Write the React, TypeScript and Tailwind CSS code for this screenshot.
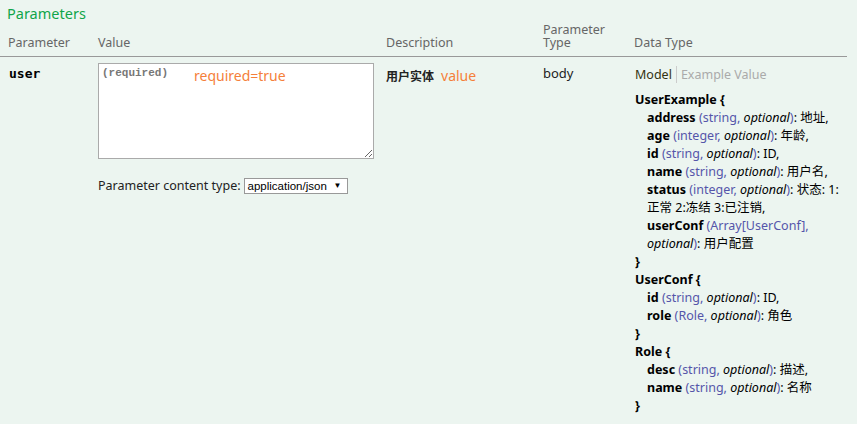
import React from "react";

const font = { fontFamily: '"Noto Sans", "Noto Sans CJK SC", sans-serif' };

type Prop = { name: string; type: string; desc: string };

const models: { title: string; props: Prop[] }[] = [
  {
    title: "UserExample",
    props: [
      { name: "address", type: "string", desc: "地址" },
      { name: "age", type: "integer", desc: "年龄" },
      { name: "id", type: "string", desc: "ID" },
      { name: "name", type: "string", desc: "用户名" },
      { name: "status", type: "integer", desc: "状态: 1:正常 2:冻结 3:已注销" },
      { name: "userConf", type: "Array[UserConf]", desc: "用户配置" },
    ],
  },
  {
    title: "UserConf",
    props: [
      { name: "id", type: "string", desc: "ID" },
      { name: "role", type: "Role", desc: "角色" },
    ],
  },
  {
    title: "Role",
    props: [
      { name: "desc", type: "string", desc: "描述" },
      { name: "name", type: "string", desc: "名称" },
    ],
  },
];

function Model() {
  return (
    <div className="text-[12.5px] leading-[18px] text-black mt-[8px]">
      {models.map((m) => (
        <div key={m.title}>
          <div className="font-bold">{m.title} {"{"}</div>
          {m.props.map((p, i) => (
            <div key={p.name} className="pl-[12px]">
              <span className="font-bold">{p.name}</span>{" "}
              <span className="text-[#55a]">
                ({p.type}, <span className="italic text-black">optional</span>)
              </span>
              : {p.desc}
              {i < m.props.length - 1 ? "," : ""}
            </div>
          ))}
          <div className="font-bold">{"}"}</div>
        </div>
      ))}
    </div>
  );
}

export default function App() {
  return (
    <div className="w-[857px] h-[424px] bg-[#ecf5f0] overflow-hidden" style={font}>
      <h4 className="text-[#10a54a] text-[14.5px] pl-[7px] pt-[3px] leading-[20px]">Parameters</h4>
      <div className="mr-[10px]">
        <div className="grid grid-cols-[98px_288px_157px_91px_1fr] items-end text-[12.5px] text-[#666] leading-[13px] pb-[7px] border-b border-[#999]">
          <div className="pl-[8px]">Parameter</div>
          <div>Value</div>
          <div>Description</div>
          <div>
            Parameter
            <br />
            Type
          </div>
          <div>Data Type</div>
        </div>
        <div className="grid grid-cols-[98px_288px_157px_91px_1fr] text-[12.5px] pt-[6px]">
          <div className="pl-[9px] pt-[1px] font-bold text-[13px]" style={{ fontFamily: '"DejaVu Sans Mono", monospace' }}>
            user
          </div>
          <div>
            <div className="relative w-[276px]">
              <textarea
                className="w-[276px] h-[96px] bg-white border border-[#aaa] outline-none resize-y block px-[3px] py-[1px] text-[11px] font-bold placeholder:text-[#777]"
                style={{ fontFamily: '"Liberation Mono", monospace' }}
                placeholder="(required)"
              />
              <span className="absolute left-[96px] top-[2px] text-[14px] text-[#f57f3a]">required=true</span>
            </div>
            <div className="mt-[18px] flex items-center gap-[3px] text-[12.5px] text-[#222]">
              <span>Parameter content type:</span>
              <div
                className="border border-[#999] bg-white h-[16px] w-[104px] flex items-center justify-between pl-[3px] pr-[5px] text-[11.5px] leading-[14px] text-black"
                style={{ fontFamily: '"Liberation Sans", sans-serif' }}
              >
                <span>application/json</span>
                <span className="text-[8px]">▼</span>
              </div>
            </div>
          </div>
          <div className="pt-[2px] text-[#222]">
            <span className="font-bold text-[12px]">用户实体</span>
            <span className="ml-[7px] text-[14px] text-[#f57f3a]">value</span>
          </div>
          <div className="pt-[1px] text-[#222] text-[13px]">body</div>
          <div className="pt-[3px] pl-[1px]">
            <div className="flex items-center text-[12.5px] leading-[17px]">
              <span className="text-[#331]">Model</span>
              <span className="ml-[4px] pl-[4px] border-l border-[#ccc] text-[#aaa]">Example Value</span>
            </div>
            <Model />
          </div>
        </div>
      </div>
    </div>
  );
}
